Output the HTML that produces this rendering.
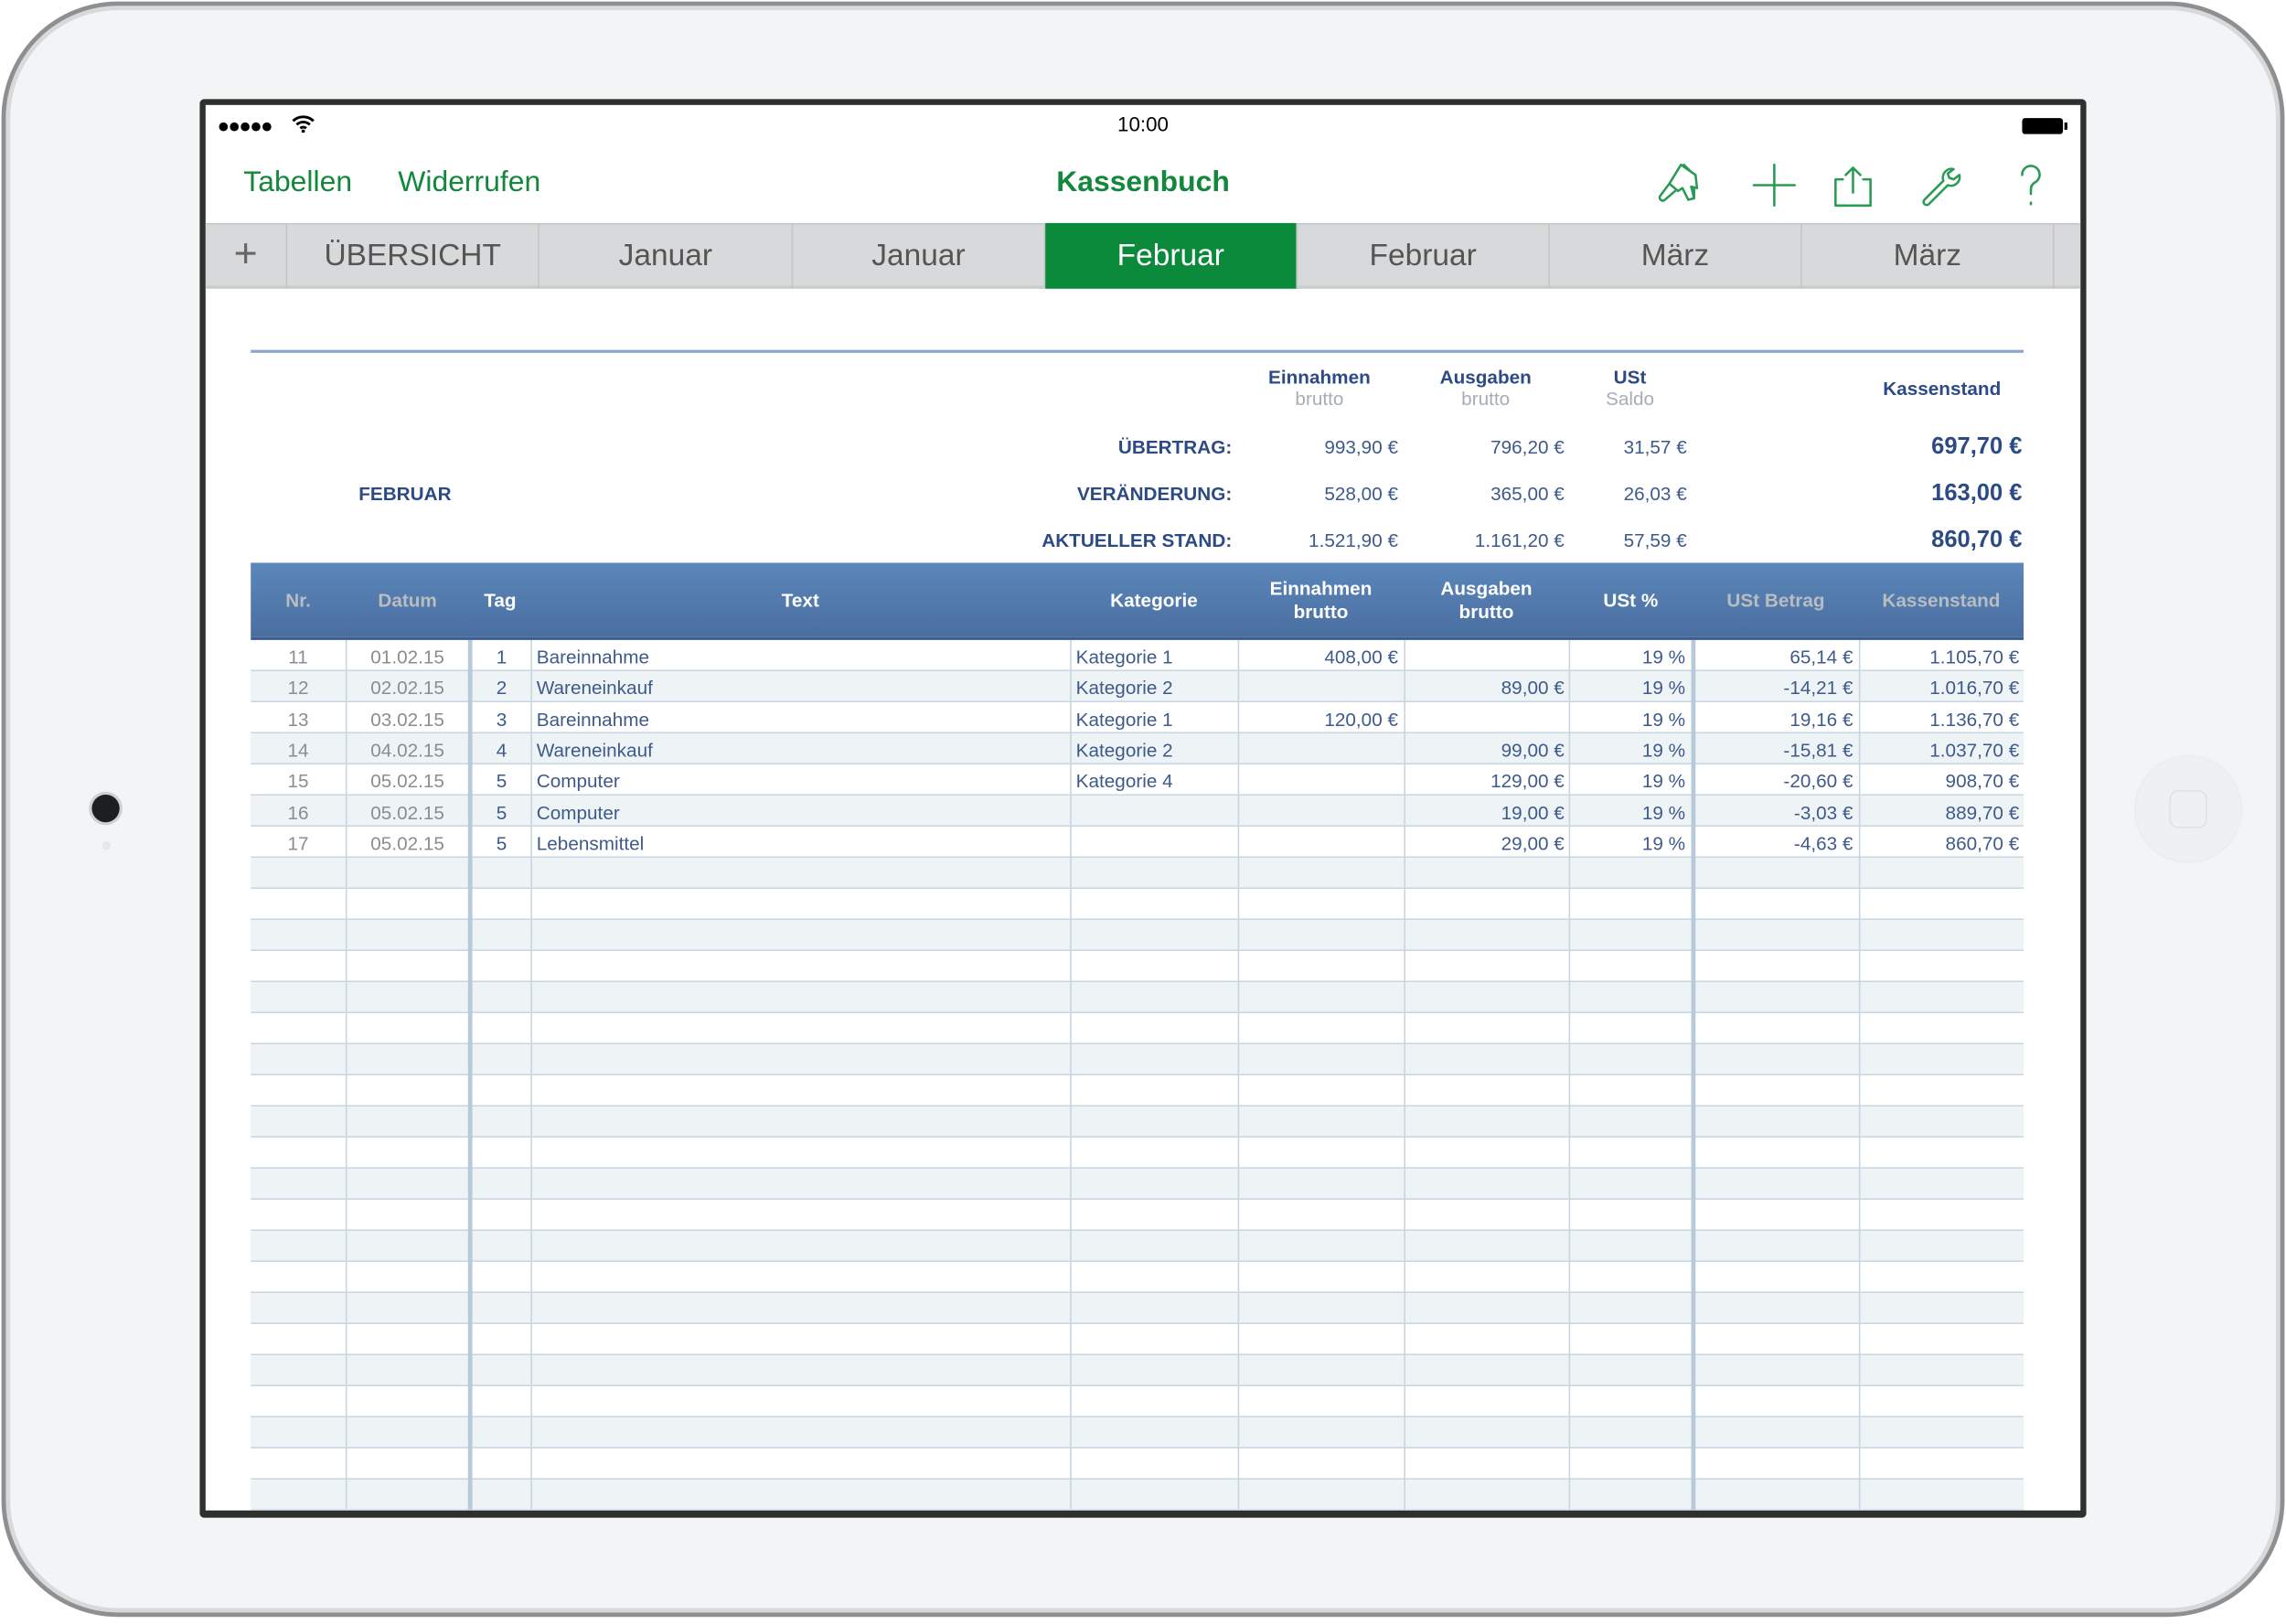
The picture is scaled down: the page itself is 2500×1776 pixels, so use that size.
<!DOCTYPE html>
<html><head><meta charset="utf-8"><style>
*{margin:0;padding:0;box-sizing:border-box}
html,body{width:2500px;height:1776px;overflow:hidden;background:#fff}
#w{position:absolute;left:0;top:0;width:1568px;height:1114px;transform:scale(1.5944);transform-origin:0 0;font-family:"Liberation Sans",sans-serif}
.a{position:absolute}
.dev{left:1px;top:1px;width:1566px;height:1108px;border-radius:80px;background:#f3f4f5;border:3px solid #8e8f90;box-shadow:inset 0 0 0 3px #d8d9da}
.scr{left:137px;top:68px;width:1294px;height:973px;background:#2e302e;border-radius:3px}
.in{left:141px;top:72px;width:1286px;height:964px;background:#fff;overflow:hidden}
.g{color:#13873b}
.tab{position:absolute;top:81px;height:45px;border-right:1px solid #c4c5c6;font-size:21px;color:#555;text-align:center;line-height:46px}
.h{color:#2c4a84;font-weight:bold;font-size:13px}
.s{color:#a6adb5;font-size:13px}
.v{color:#3e5a8c;font-size:13px}
.r{text-align:right}
.c{text-align:center}
.th{position:absolute;top:0;height:52px;color:#fff;font-weight:bold;font-size:13px;display:flex;align-items:center;justify-content:center;text-align:center;line-height:16px}
.cell{position:absolute;font-size:13px;color:#3e5a8c;height:21.33px;line-height:21px}
.vl{position:absolute;top:367px;bottom:0;width:1px;background:#c8d6e2}
</style></head><body><div id="w">
<div class="a dev"></div>
<div class="a" style="left:63px;top:545px;width:19px;height:19px;border-radius:50%;background:#1c1e22;box-shadow:0 0 0 2px #cfd0d2"></div>
<div class="a" style="left:70px;top:577px;width:6px;height:6px;border-radius:50%;background:#e6e7e8"></div>
<div class="a" style="left:1465px;top:519px;width:72px;height:72px;border-radius:50%;background:#eff0f1;box-shadow:0 0 2px #dcdcdc"></div>
<div class="a" style="left:1488px;top:542px;width:26px;height:26px;border-radius:6px;border:1.5px solid #e0e1e2"></div>
<div class="a scr"></div>
<div class="a in">
 <div class="a" style="left:8px;top:6px;font-size:14px;letter-spacing:-1px">●●●●●</div>
 <svg class="a" style="left:59px;top:7px" width="16" height="12" viewBox="0 0 16 12"><path d="M1 4a10 10 0 0 1 14 0M3.5 6.5a6.5 6.5 0 0 1 9 0M6 9a3 3 0 0 1 4 0" stroke="#000" stroke-width="1.8" fill="none"/><circle cx="8" cy="11" r="1.2"/></svg>
 <div class="a" style="left:0;width:1286px;top:5px;text-align:center;font-size:14px">10:00</div>
 <div class="a" style="left:1246px;top:9px;width:28px;height:11px;background:#000;border-radius:2px"></div>
 <div class="a" style="left:1275px;top:12px;width:2px;height:5px;background:#000"></div>
 <div class="a g" style="left:26px;top:42px;font-size:20px">Tabellen</div>
 <div class="a g" style="left:132px;top:42px;font-size:20px">Widerrufen</div>
 <div class="a g" style="left:0;width:1286px;top:42px;text-align:center;font-size:20px;font-weight:bold">Kassenbuch</div>
 <svg class="a" style="left:995px;top:38px" width="290" height="34" viewBox="0 0 290 34" fill="none" stroke="#2a9a55" stroke-width="1.6" stroke-linecap="round" stroke-linejoin="round">
  <path d="M17 3l-8 13 6 5 3-2 4 8 4-1-2-8 4 1-1-9zM9 16l-6 8a2 2 0 0 0 3 3l7-6M19 3l5 5M26 19v6"/>
  <path d="M81 3v28M67 17h28"/>
  <path d="M135 5v17M130 10l5-5 5 5M128 13h-5v18h24v-18h-5"/>
  <path d="M204 6a6 6 0 0 0-7 8l-13 13a2 2 0 0 0 3 3l13-13a6 6 0 0 0 8-7l-4 3-3-1-1-3z"/>
  <path d="M251 10a6 6 0 1 1 9 5c-2 1-3 3-3 5v3M257 29v1"/>
 </svg>
 <div class="a" style="left:0;top:81px;width:1286px;height:45px;background:#d8d9da;border-top:1px solid #c6c7c8;border-bottom:2px solid #c9cacb"></div>
 <div class="tab" style="left:0;width:56px;font-size:28px;line-height:42px;color:#666;font-weight:300">+</div>
 <div class="tab" style="left:56px;width:173px">ÜBERSICHT</div>
 <div class="tab" style="left:229px;width:174px">Januar</div>
 <div class="tab" style="left:403px;width:173px">Januar</div>
 <div class="tab" style="left:576px;width:173px;background:#0b8a3b;color:#fff">Februar</div>
 <div class="tab" style="left:749px;width:173px">Februar</div>
 <div class="tab" style="left:922px;width:173px">März</div>
 <div class="tab" style="left:1095px;width:173px">März</div>

 <div class="a" style="left:31px;top:168px;width:1216px;height:2px;background:#8aa6cc"></div>
 <div class="a h c" style="left:709px;width:110px;top:179px">Einnahmen</div>
 <div class="a s c" style="left:709px;width:110px;top:194px">brutto</div>
 <div class="a h c" style="left:823px;width:110px;top:179px">Ausgaben</div>
 <div class="a s c" style="left:823px;width:110px;top:194px">brutto</div>
 <div class="a h c" style="left:922px;width:110px;top:179px">USt</div>
 <div class="a s c" style="left:922px;width:110px;top:194px">Saldo</div>
 <div class="a h c" style="left:1134px;width:114px;top:187px">Kassenstand</div>
 <div class="a h" style="left:105px;top:259px">FEBRUAR</div>
 <div class="a h r" style="left:400px;width:304px;top:227px">ÜBERTRAG:</div>
 <div class="a h r" style="left:400px;width:304px;top:259px">VERÄNDERUNG:</div>
 <div class="a h r" style="left:400px;width:304px;top:291px">AKTUELLER STAND:</div>
 <div class="a v r" style="left:718px;width:100px;top:227px">993,90 €</div>
 <div class="a v r" style="left:718px;width:100px;top:259px">528,00 €</div>
 <div class="a v r" style="left:718px;width:100px;top:291px">1.521,90 €</div>
 <div class="a v r" style="left:832px;width:100px;top:227px">796,20 €</div>
 <div class="a v r" style="left:832px;width:100px;top:259px">365,00 €</div>
 <div class="a v r" style="left:832px;width:100px;top:291px">1.161,20 €</div>
 <div class="a v r" style="left:916px;width:100px;top:227px">31,57 €</div>
 <div class="a v r" style="left:916px;width:100px;top:259px">26,03 €</div>
 <div class="a v r" style="left:916px;width:100px;top:291px">57,59 €</div>
 <div class="a h r" style="left:1100px;width:146px;top:226px;font-size:16px">697,70 €</div>
 <div class="a h r" style="left:1100px;width:146px;top:258px;font-size:16px">163,00 €</div>
 <div class="a h r" style="left:1100px;width:146px;top:290px;font-size:16px">860,70 €</div>

 <div class="a" style="left:31px;top:314px;width:1216px;height:653px">
  <div class="a" style="left:0;top:0;width:1216px;height:53px;background:linear-gradient(#5b87ba,#4a6ea0);border-bottom:2px solid #3c5f92"></div>
  <div class="th" style="left:0;width:65px;color:#b9bcc0">Nr.</div>
  <div class="th" style="left:65px;width:85px;color:#b9bcc0">Datum</div>
  <div class="th" style="left:150px;width:42px">Tag</div>
  <div class="th" style="left:192px;width:370px">Text</div>
  <div class="th" style="left:562px;width:115px">Kategorie</div>
  <div class="th" style="left:677px;width:114px">Einnahmen<br>brutto</div>
  <div class="th" style="left:791px;width:113px">Ausgaben<br>brutto</div>
  <div class="th" style="left:904px;width:85px">USt %</div>
  <div class="th" style="left:989px;width:114px;color:#b9bcc0">USt Betrag</div>
  <div class="th" style="left:1103px;width:113px;color:#b9bcc0">Kassenstand</div>
  <div class="a" style="left:0;top:53px;width:1216px;height:600px;background:repeating-linear-gradient(to bottom,#fff 0,#fff 20.33px,#c8d6e2 20.33px,#c8d6e2 21.33px,#eef3f6 21.33px,#eef3f6 41.66px,#c8d6e2 41.66px,#c8d6e2 42.66px)"></div>
 </div>
</div>
<div class="a" style="left:172px;top:439px;width:1216px;height:597px">
 <div class="vl" style="left:65px;top:0"></div>
 <div class="vl" style="left:149px;top:0;width:3px;background:#b8cad9"></div>
 <div class="vl" style="left:192px;top:0"></div>
 <div class="vl" style="left:562px;top:0"></div>
 <div class="vl" style="left:677px;top:0"></div>
 <div class="vl" style="left:791px;top:0"></div>
 <div class="vl" style="left:904px;top:0"></div>
 <div class="vl" style="left:988px;top:0;width:3px;background:#b8cad9"></div>
 <div class="vl" style="left:1103px;top:0"></div>
</div>
<div class="a" style="left:172px;top:440px;width:1216px;font-size:13px" id="rows">
</div>
<script>
var d=[["11","01.02.15","1","Bareinnahme","Kategorie 1","408,00 €","","65,14 €","1.105,70 €"],
["12","02.02.15","2","Wareneinkauf","Kategorie 2","","89,00 €","-14,21 €","1.016,70 €"],
["13","03.02.15","3","Bareinnahme","Kategorie 1","120,00 €","","19,16 €","1.136,70 €"],
["14","04.02.15","4","Wareneinkauf","Kategorie 2","","99,00 €","-15,81 €","1.037,70 €"],
["15","05.02.15","5","Computer","Kategorie 4","","129,00 €","-20,60 €","908,70 €"],
["16","05.02.15","5","Computer","","","19,00 €","-3,03 €","889,70 €"],
["17","05.02.15","5","Lebensmittel","","","29,00 €","-4,63 €","860,70 €"]];
var h="";
d.forEach(function(r,i){var t=i*21.33;
function c(l,w,txt,al,col){h+='<div class="cell" style="left:'+l+'px;width:'+w+'px;top:'+t+'px;text-align:'+al+';color:'+(col||'#3e5a8c')+'">'+txt+'</div>';}
c(0,65,r[0],'center','#8a8d91');c(65,85,r[1],'center','#8a8d91');c(152,40,r[2],'center');
c(196,300,r[3],'left');c(566,110,r[4],'left');c(677,110,r[5],'right');c(791,110,r[6],'right');
c(904,80,'19 %','right');c(991,108,r[7],'right');c(1103,110,r[8],'right');});
document.getElementById('rows').innerHTML=h;
</script>
</div></body></html>
